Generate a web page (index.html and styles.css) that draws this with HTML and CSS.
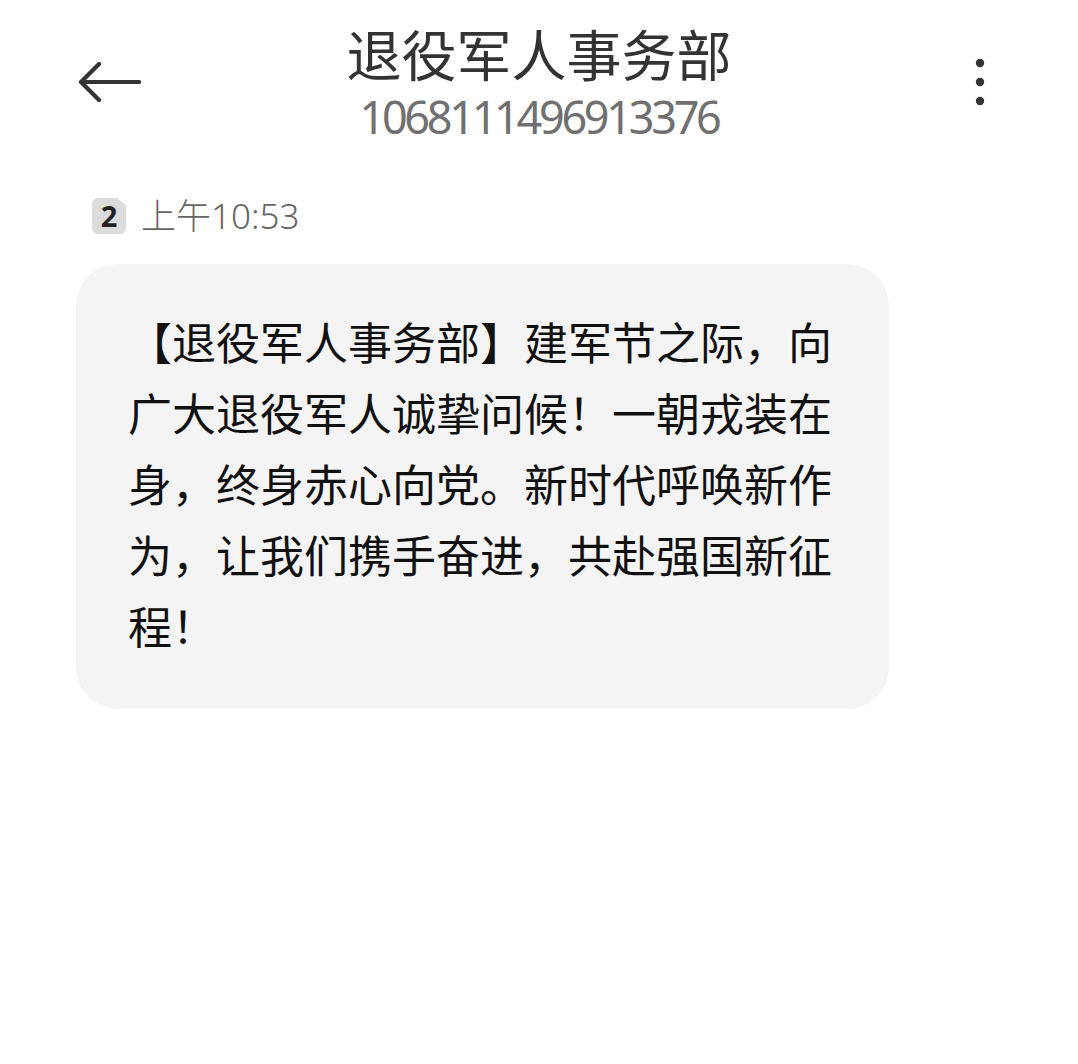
FILE: index.html
```html
<!DOCTYPE html>
<html lang="zh-CN">
<head>
    <meta charset="UTF-8">
    <title>退役军人事务部</title>
    <link rel="stylesheet" href="styles.css">
</head>
<body>
    <div class="topbar">
        <span class="back">
            <svg width="64" height="44" viewBox="0 0 64 44">
                <path d="M62 22H5M22 4L4 22l18 18" fill="none" stroke="#333" stroke-width="4.2" stroke-linecap="round" stroke-linejoin="round"/>
            </svg>
        </span>
        <div class="title">
            <h1>退役军人事务部</h1>
            <div class="number">1068111496913376</div>
        </div>
        <span class="more">
            <svg width="12" height="48" viewBox="0 0 12 48">
                <circle cx="6" cy="5" r="4.2" fill="#333"/>
                <circle cx="6" cy="24" r="4.2" fill="#333"/>
                <circle cx="6" cy="43" r="4.2" fill="#333"/>
            </svg>
        </span>
    </div>

    <div class="meta">
        <span class="sim">2</span>
        <span class="time">上午10:53</span>
    </div>

    <div class="bubble">
        【退役军人事务部】建军节之际，向广大退役军人诚挚问候！一朝戎装在身，终身赤心向党。新时代呼唤新作为，让我们携手奋进，共赴强国新征程！
    </div>
</body>
</html>
```

FILE: styles.css
```css
body {
    margin: 0;
    background: #fff;
    font-family: "Noto Sans", "Noto Sans CJK SC", sans-serif;
    color: #333;
}
.topbar {
    display: grid;
    grid-template-columns: 1fr auto 1fr;
    padding-top: 20px;
}
.back {
    justify-self: start;
    margin: 40px 0 0 77px;
    line-height: 0;
}
.more {
    justify-self: end;
    margin: 38px 92px 0 0;
    line-height: 0;
}
.title {
    text-align: center;
}
.title h1 {
    margin: 0;
    font-family: "Noto Sans CJK SC", sans-serif;
    font-size: 55px;
    font-weight: 400;
    line-height: 64px;
    color: #333;
}
.number {
    margin-top: 2px;
    font-size: 45px;
    font-weight: 400;
    line-height: 62px;
    letter-spacing: -3.3px;
    color: #707070;
}
.meta {
    display: flex;
    align-items: center;
    gap: 15px;
    margin: 48px 0 0 92px;
    height: 40px;
}
.sim {
    width: 34px;
    height: 36px;
    border-radius: 6px;
    background: #dcdcdc;
    clip-path: polygon(0 0, 74% 0, 100% 20%, 100% 100%, 0 100%);
    font-size: 29px;
    font-weight: 700;
    line-height: 36px;
    text-align: center;
    color: #222;
}
.time {
    font-size: 35px;
    font-weight: 300;
    line-height: 40px;
    color: #666;
}
.bubble {
    width: 710px;
    margin: 28px 0 0 76px;
    padding: 42px 51px 48px 52px;
    border-radius: 42px;
    background: #f4f4f4;
    font-family: "Noto Sans CJK SC", sans-serif;
    font-size: 44px;
    line-height: 71px;
    color: #111;
}
```
